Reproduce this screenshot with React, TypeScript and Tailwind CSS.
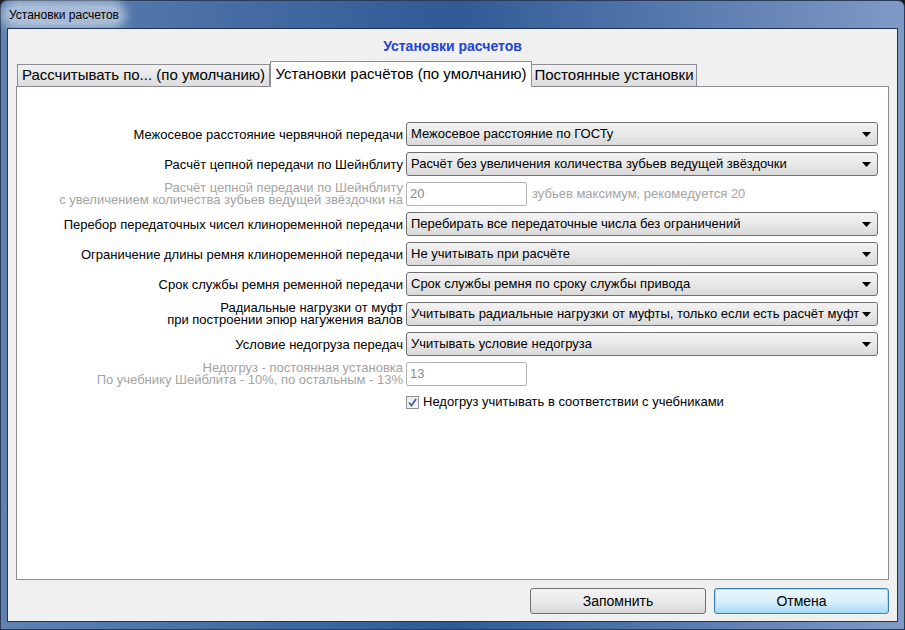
import React from "react";

const font = { fontFamily: '"Liberation Sans", Arial, sans-serif' };

function Arrow() {
  return (
    <svg width="9" height="5" viewBox="0 0 9 5" className="shrink-0">
      <path d="M0 0 H9 L4.5 5 Z" fill="#000" />
    </svg>
  );
}

function Select({ value }: { value: string }) {
  return (
    <div className="flex h-[24px] items-center justify-between rounded-[3px] border border-[#707070] bg-gradient-to-b from-[#f3f3f3] via-[#e8e8e8] to-[#d9d9d9] pl-[4px] pr-[6px] text-[13px] text-black whitespace-nowrap overflow-hidden">
      <span>{value}</span>
      <Arrow />
    </div>
  );
}

function Label({ lines, muted }: { lines: string[]; muted?: boolean }) {
  return (
    <div
      className={
        "flex flex-col items-end justify-center text-right text-[13px] whitespace-nowrap " +
        (lines.length > 1 ? "leading-[12px] " : "leading-[15px] ") +
        (muted ? "text-[#a3a3a3]" : "text-black")
      }
    >
      {lines.map((l) => (
        <span key={l}>{l}</span>
      ))}
    </div>
  );
}

function Field({ value, note }: { value: string; note?: string }) {
  return (
    <div className="flex items-center gap-[5px]">
      <div className="flex h-[24px] w-[121px] items-center rounded-[2px] border border-[#b4b4b4] bg-white px-[3px] text-[13px] text-[#8a8a8a]">
        {value}
      </div>
      {note && <span className="text-[13px] text-[#a3a3a3]">{note}</span>}
    </div>
  );
}

const rows: { label: string[]; muted?: boolean; select?: string; field?: string; note?: string }[] = [
  { label: ["Межосевое расстояние червячной передачи"], select: "Межосевое расстояние по ГОСТу" },
  { label: ["Расчёт цепной передачи по Шейнблиту"], select: "Расчёт без увеличения количества зубьев ведущей звёздочки" },
  {
    label: ["Расчёт цепной передачи по Шейнблиту", "с увеличением количества зубьев ведущей звёздочки на"],
    muted: true,
    field: "20",
    note: "зубьев максимум, рекомедуется 20",
  },
  { label: ["Перебор передаточных чисел клиноременной передачи"], select: "Перебирать все передаточные числа без ограничений" },
  { label: ["Ограничение длины ремня клиноременной передачи"], select: "Не учитывать при расчёте" },
  { label: ["Срок службы ремня ременной передачи"], select: "Срок службы ремня по сроку службы привода" },
  {
    label: ["Радиальные нагрузки от муфт", "при построении эпюр нагужения валов"],
    select: "Учитывать радиальные нагрузки от муфты, только если есть расчёт муфт",
  },
  { label: ["Условие недогруза передач"], select: "Учитывать условие недогруза" },
  {
    label: ["Недогруз - постоянная установка", "По учебнику Шейблита - 10%, по остальным - 13%"],
    muted: true,
    field: "13",
  },
];

export default function App() {
  return (
    <div style={font} className="h-[630px] w-[905px] overflow-hidden bg-[#1a1a1a]">
      <div className="flex h-full w-full flex-col rounded-t-[7px] border border-[#2a3c57] bg-gradient-to-r from-[#5f82b2] via-[#2f5a96] to-[#7f9ac5] px-[6px] pb-[7px]">
        {/* title bar */}
        <div className="flex h-[27px] shrink-0 items-center pl-[1px] text-[12px] text-black">
          <span className="rounded-full bg-[#dfe8f3]/60 px-[1px] shadow-[0_0_10px_6px_rgba(223,232,243,0.6)]">
            Установки расчетов
          </span>
        </div>

        {/* client area */}
        <div className="flex flex-1 flex-col border border-[#1f3556] bg-[#f0f0f0] pl-[8px] pr-[8px] pb-[7px]">
          <div className="pt-[9px] text-center text-[14px] font-bold leading-[17px] text-[#1d44d6]">
            Установки расчетов
          </div>

          {/* tabs */}
          <div className="mt-[6px] flex h-[25px] items-end pl-[1px] text-[15px]">
            <div className="flex h-[22px] w-[253px] items-center justify-center border border-b-0 border-[#8c8e94] bg-gradient-to-b from-[#f2f2f2] to-[#dcdcdc] text-black">
              Рассчитывать по... (по умолчанию)
            </div>
            <div className="relative z-10 -mb-px flex h-[26px] w-[262px] items-center justify-center border border-b-0 border-[#8c8e94] bg-white text-black">
              Установки расчётов (по умолчанию)
            </div>
            <div className="flex h-[22px] w-[165px] items-center justify-center border border-b-0 border-l-0 border-[#8c8e94] bg-gradient-to-b from-[#f2f2f2] to-[#dcdcdc] text-black">
              Постоянные установки
            </div>
          </div>

          {/* panel */}
          <div className="flex-1 border border-[#898c95] bg-white pt-[35px]">
            <div className="grid grid-cols-[386px_472px] gap-x-[3px] gap-y-[6px]">
              {rows.map((r, i) => (
                <React.Fragment key={i}>
                  <div className="flex h-[24px] justify-end">
                    <Label lines={r.label} muted={r.muted} />
                  </div>
                  <div className="h-[24px]">
                    {r.select ? <Select value={r.select} /> : <Field value={r.field!} note={r.note} />}
                  </div>
                </React.Fragment>
              ))}
              <div />
              <div className="flex h-[20px] items-center gap-[4px] text-[13px] text-black">
                <div className="flex h-[13px] w-[13px] items-center justify-center border border-[#8e8f8f] bg-gradient-to-b from-[#e9ecf3] to-[#f9f9fb]">
                  <svg width="9" height="9" viewBox="0 0 9 9">
                    <path d="M1 4.5 L3.5 7.5 L8 1" stroke="#4a5d9a" strokeWidth="1.8" fill="none" />
                  </svg>
                </div>
                <span>Недогруз учитывать в соответствии с учебниками</span>
              </div>
            </div>
          </div>

          {/* buttons */}
          <div className="mt-[8px] flex justify-end gap-[8px] text-[14px]">
            <button className="h-[26px] w-[176px] rounded-[3px] border border-[#707070] bg-gradient-to-b from-[#f2f2f2] via-[#ebebeb] to-[#d6d6d6] text-black">
              Запомнить
            </button>
            <button className="h-[26px] w-[175px] rounded-[3px] border border-[#3c7fb1] bg-gradient-to-b from-[#eaf6fd] via-[#d9f0fc] to-[#a7d9f5] text-black shadow-[inset_0_0_0_1px_#9fdcf6]">
              Отмена
            </button>
          </div>
        </div>
      </div>
    </div>
  );
}
